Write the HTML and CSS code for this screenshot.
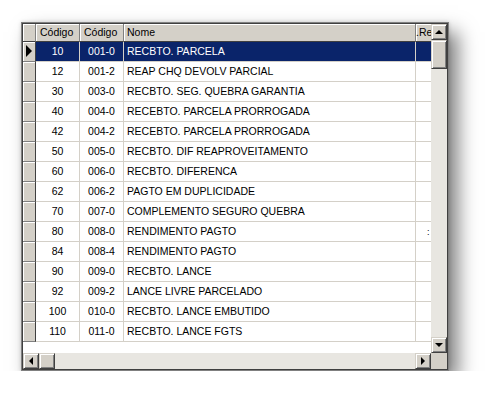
FILE: index.html
```html
<!DOCTYPE html>
<html lang="pt">
<head>
<meta charset="utf-8">
<title>Grade</title>
<link rel="stylesheet" href="styles.css">
</head>
<body>
<div class="page">
  <div class="grid">
    <div class="frame">
      <div class="top">
        <div class="table">
          <div class="row head">
            <div class="c ind"></div>
            <div class="c num">Código</div>
            <div class="c num">Código</div>
            <div class="c name">Nome</div>
            <div class="c re">.Re</div>
          </div>
          <div class="row sel">
            <div class="c ind"><span class="ptr"></span></div>
            <div class="c code">10</div><div class="c code">001-0</div><div class="c name">RECBTO. PARCELA</div><div class="c re"></div>
          </div>
          <div class="row">
            <div class="c ind"></div>
            <div class="c code">12</div><div class="c code">001-2</div><div class="c name">REAP CHQ DEVOLV PARCIAL</div><div class="c re"></div>
          </div>
          <div class="row">
            <div class="c ind"></div>
            <div class="c code">30</div><div class="c code">003-0</div><div class="c name">RECBTO. SEG. QUEBRA GARANTIA</div><div class="c re"></div>
          </div>
          <div class="row">
            <div class="c ind"></div>
            <div class="c code">40</div><div class="c code">004-0</div><div class="c name">RECEBTO. PARCELA PRORROGADA</div><div class="c re"></div>
          </div>
          <div class="row">
            <div class="c ind"></div>
            <div class="c code">42</div><div class="c code">004-2</div><div class="c name">RECEBTO. PARCELA PRORROGADA</div><div class="c re"></div>
          </div>
          <div class="row">
            <div class="c ind"></div>
            <div class="c code">50</div><div class="c code">005-0</div><div class="c name">RECBTO. DIF REAPROVEITAMENTO</div><div class="c re"></div>
          </div>
          <div class="row">
            <div class="c ind"></div>
            <div class="c code">60</div><div class="c code">006-0</div><div class="c name">RECBTO. DIFERENCA</div><div class="c re"></div>
          </div>
          <div class="row">
            <div class="c ind"></div>
            <div class="c code">62</div><div class="c code">006-2</div><div class="c name">PAGTO EM DUPLICIDADE</div><div class="c re"></div>
          </div>
          <div class="row">
            <div class="c ind"></div>
            <div class="c code">70</div><div class="c code">007-0</div><div class="c name">COMPLEMENTO SEGURO QUEBRA</div><div class="c re"></div>
          </div>
          <div class="row">
            <div class="c ind"></div>
            <div class="c code">80</div><div class="c code">008-0</div><div class="c name">RENDIMENTO PAGTO</div><div class="c re"><span class="clip">:</span></div>
          </div>
          <div class="row">
            <div class="c ind"></div>
            <div class="c code">84</div><div class="c code">008-4</div><div class="c name">RENDIMENTO PAGTO</div><div class="c re"></div>
          </div>
          <div class="row">
            <div class="c ind"></div>
            <div class="c code">90</div><div class="c code">009-0</div><div class="c name">RECBTO. LANCE</div><div class="c re"></div>
          </div>
          <div class="row">
            <div class="c ind"></div>
            <div class="c code">92</div><div class="c code">009-2</div><div class="c name">LANCE LIVRE PARCELADO</div><div class="c re"></div>
          </div>
          <div class="row">
            <div class="c ind"></div>
            <div class="c code">100</div><div class="c code">010-0</div><div class="c name">RECBTO. LANCE EMBUTIDO</div><div class="c re"></div>
          </div>
          <div class="row">
            <div class="c ind"></div>
            <div class="c code">110</div><div class="c code">011-0</div><div class="c name">RECBTO. LANCE FGTS</div><div class="c re"></div>
          </div>
        </div>
        <div class="vscroll">
          <div class="btn"><span class="arr up"></span></div>
          <div class="btn thumb-v"></div>
          <div class="track"></div>
          <div class="btn"><span class="arr down"></span></div>
        </div>
      </div>
      <div class="bottom">
        <div class="hscroll">
          <div class="btn"><span class="arr left"></span></div>
          <div class="btn thumb-h"></div>
          <div class="track"></div>
          <div class="btn"><span class="arr right"></span></div>
        </div>
        <div class="corner"></div>
      </div>
    </div>
  </div>
</div>
</body>
</html>
```

FILE: styles.css
```css
html, body {
  margin: 0;
  padding: 0;
  background: #ffffff;
}

body {
  font-family: "Liberation Sans", Arial, sans-serif;
  font-size: 10.5px;
  color: #000;
}

.page {
  padding: 22px 0 0 21px;
}

.grid {
  width: 428px;
  box-sizing: border-box;
  border: 1px solid #808080;
  box-shadow: 9px 10px 18px rgba(0, 0, 0, 0.5), 0 0 4px rgba(0, 0, 0, 0.15);
}

.frame {
  border: 1px solid #404040;
  display: flex;
  flex-direction: column;
}

.top {
  display: flex;
  height: 329px;
}

.table {
  width: 408px;
  background: #fff;
  overflow: hidden;
}

.row {
  display: grid;
  grid-template-columns: 13px 44px 44px 292px 15px;
  height: 20px;
}

.c {
  box-sizing: border-box;
  border-right: 1px solid #d4d0c8;
  border-bottom: 1px solid #d4d0c8;
  line-height: 19px;
  white-space: nowrap;
  overflow: hidden;
}

.c.re {
  border-right: none;
}

.code {
  text-align: center;
}

.name {
  padding-left: 3px;
}

.c.ind {
  background: #d4d0c8;
  border-right: 1px solid #404040;
  border-bottom: 1px solid #808080;
  box-shadow: inset 1px 1px #ffffff;
  position: relative;
}

.head {
  height: 18px;
}

.head .c {
  background: #d4d0c8;
  border-right: 1px solid #808080;
  border-bottom: 1px solid #404040;
  box-shadow: inset 1px 1px #ffffff;
  line-height: 17px;
}

.head .num {
  padding-left: 4px;
}

.head .c.re {
  padding-left: 0;
  border-right: none;
}

.sel .c:not(.ind) {
  background: #0a246a;
  color: #ffffff;
}

.ptr {
  position: absolute;
  left: 3px;
  top: 3px;
  width: 0;
  height: 0;
  border-left: 6px solid #000;
  border-top: 6px solid transparent;
  border-bottom: 6px solid transparent;
}

.clip {
  padding-left: 11px;
  font-size: 9px;
}

.vscroll {
  width: 16px;
  display: flex;
  flex-direction: column;
  background: #e8e6e1;
}

.btn {
  box-sizing: border-box;
  width: 16px;
  height: 16px;
  flex: none;
  background: #d4d0c8;
  border: 1px solid;
  border-color: #d4d0c8 #404040 #404040 #d4d0c8;
  box-shadow: inset 1px 1px #ffffff, inset -1px -1px #808080;
  display: flex;
  align-items: center;
  justify-content: center;
}

.thumb-v {
  height: 29px;
}

.track {
  flex: 1;
}

.bottom {
  display: flex;
  height: 16px;
}

.hscroll {
  width: 408px;
  display: flex;
  background: #e8e6e1;
}

.corner {
  width: 16px;
  background: #d4d0c8;
}

.arr {
  width: 0;
  height: 0;
}

.arr.up {
  border-left: 4px solid transparent;
  border-right: 4px solid transparent;
  border-bottom: 4px solid #000;
}

.arr.down {
  border-left: 4px solid transparent;
  border-right: 4px solid transparent;
  border-top: 4px solid #000;
}

.arr.left {
  border-top: 4px solid transparent;
  border-bottom: 4px solid transparent;
  border-right: 4px solid #000;
}

.arr.right {
  border-top: 4px solid transparent;
  border-bottom: 4px solid transparent;
  border-left: 4px solid #000;
}
```
